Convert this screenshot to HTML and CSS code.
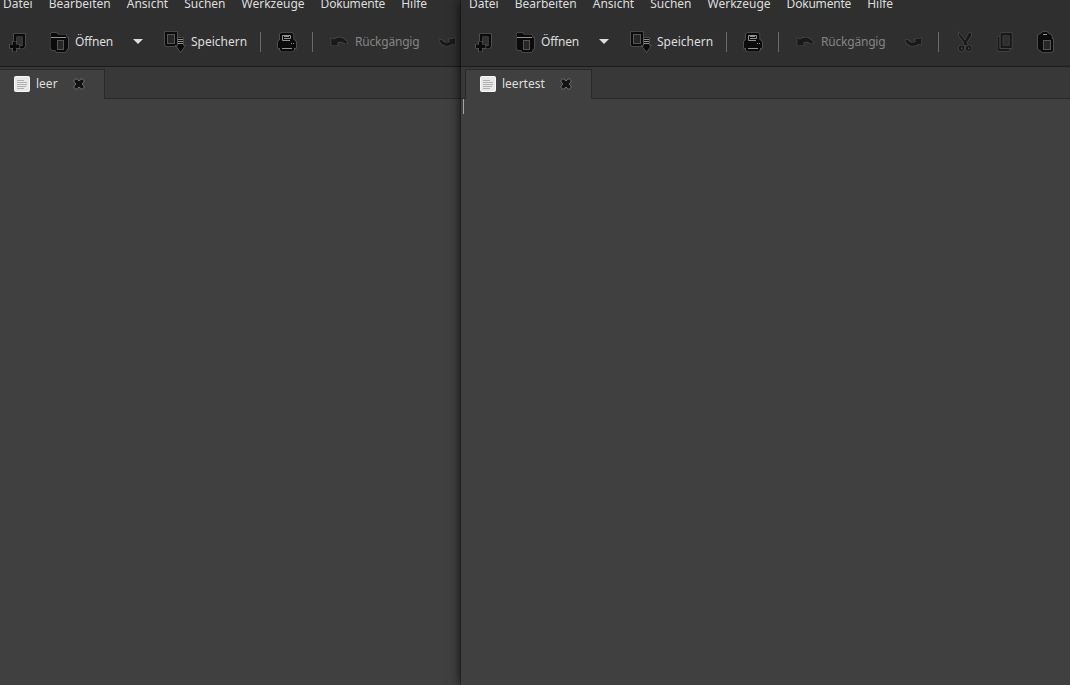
FILE: index.html
```
<!DOCTYPE html>
<html lang="de">
<head>
<meta charset="utf-8">
<title>leertest</title>
<link rel="stylesheet" href="styles.css">
</head>
<body>
<svg class="defs" aria-hidden="true">
  <symbol id="new" viewBox="0 0 24 24">
    <path fill-rule="evenodd" d="M7 4H18V16.500L16.500 18.500H12V16H15.500V6.500H9.500V11H7Z"/>
    <path d="M6 11.500H9.200V14.500H12.500V18H9.200V21.500H6V18H3V14.500H6Z"/>
  </symbol>
  <symbol id="open" viewBox="0 0 24 24">
    <path d="M3.500 4L4.500 3H9.500L11 4.500H18.500L19.500 5.500V7.500H21V18.500L19.500 20V21L18.500 22H9.500L8 20H5L3.500 18.500Z"/>
    <path class="lit" d="M4 7.500H19"/>
    <path class="well" d="M10.500 10.500H16.500V19.500H10.500Z"/>
  </symbol>
  <symbol id="save" viewBox="0 0 24 24">
    <path d="M3 2H15V15L14 16H4L3 15Z"/>
    <path class="well" d="M5.500 4.500H12.500V13.500H5.500Z"/>
    <path d="M16 8H21V15.500H23L18.500 22L14 15.500H16Z"/>
    <path class="lit" d="M16 9.500H21M16 11.500H21M16 13.500H21"/>
  </symbol>
  <symbol id="print" viewBox="0 0 24 24">
    <path d="M6 3H17L18.500 4V9.500L21 11.500V18H19V20L18 21.500H6L5 20V18H3V11.500L5 9.500V4Z"/>
    <path class="lit" d="M7.500 10.500V5.500H15.500V8.500M9 6.500H14M9 8.500H15.500M7.500 10.500H15M7 18.500H17M16 13.500H17M18 13.500H19"/>
  </symbol>
  <symbol id="undo" viewBox="0 0 24 24">
    <path d="M4.300 8L7 9.500C11 6 17 7 20 12V13.500H17.500C15 11.300 12.500 11.500 10.200 13L11 15.500H4.300Z"/>
  </symbol>
  <symbol id="redo" viewBox="0 0 24 24">
    <path d="M4.500 10H7C9.500 13 12 13.300 15 11.500L13.500 9.500L20.500 8L20 15L17.500 14C12.500 17.500 7 16 4.500 11.500Z"/>
  </symbol>
  <symbol id="cut" viewBox="0 0 24 24">
    <path d="M6 3L12 10.500L16 3H18V6L13.500 12.500L15 15H10.500L11 12.500L6 6Z"/>
    <path fill-rule="evenodd" d="M7 15.500H10.500L11.500 17.500L10.500 20.500L8.500 21.500L6 20V17ZM8 17.500V19.500H9.500V17.500ZM14 15.500H17L18.500 17V20L16 21.500L13 20V17ZM15 17.500V19.500H16.500V17.500Z"/>
  </symbol>
  <symbol id="copy" viewBox="0 0 24 24">
    <path d="M4.500 6.500H6.500V18.800H17L15.500 21.300H6L4.500 20Z"/>
    <path fill-rule="evenodd" d="M7.500 3H18.800V18H7.500ZM9.700 5.500V15.500H16.500V5.500Z"/>
  </symbol>
  <symbol id="paste" viewBox="0 0 24 24">
    <path d="M5 5L8 3.500L9.500 2H14L15.500 3.500L18.500 5L19 9H20V21L19 22H9L7.500 20.500L5 19Z"/>
    <path class="lit" d="M10 4.500H14"/>
    <path class="well" d="M10.500 10.500H17.500V19.500H10.500Z"/>
  </symbol>
  <symbol id="page" viewBox="0 0 16 16">
    <rect class="sheet" x=".5" y=".5" width="15" height="15" rx="1"/>
    <path class="rows" d="M3 4.500H10M3 6.500H13M3 8.500H13M3 10.500H12M3 12.500H10"/>
  </symbol>
  <symbol id="close" viewBox="0 0 12 12">
    <path d="M3 1L6 3.300L9 1L11 3L8.700 6L11 9L9 11L6 8.700L3 11L1 9L3.300 6L1 3Z"/>
  </symbol>
</svg>

<main class="desktop">
  <section class="window window-back">
    <nav class="menubar"><span>Datei</span><span>Bearbeiten</span><span>Ansicht</span><span>Suchen</span><span>Werkzeuge</span><span class="tight">Dokumente</span><span>Hilfe</span></nav>
    <div class="toolbar">
      <div class="tool"><svg class="icon"><use href="#new"/></svg></div>
      <div class="tool"><svg class="icon"><use href="#open"/></svg><span class="tight">Öffnen</span></div>
      <div class="tool"><i class="arrow"></i></div>
      <div class="tool"><svg class="icon"><use href="#save"/></svg><span class="save-label">Speichern</span></div>
      <i class="separator"></i>
      <div class="tool"><svg class="icon"><use href="#print"/></svg></div>
      <i class="separator"></i>
      <div class="tool disabled"><svg class="icon"><use href="#undo"/></svg><span class="tight">Rückgängig</span></div>
      <div class="tool disabled"><svg class="icon"><use href="#redo"/></svg></div>
    </div>
    <div class="tabs">
      <div class="tab tab-short"><svg class="page"><use href="#page"/></svg><span class="title">leer</span><svg class="close"><use href="#close"/></svg></div>
    </div>
    <div class="editor"></div>
  </section>

  <section class="window window-front">
    <nav class="menubar"><span>Datei</span><span>Bearbeiten</span><span>Ansicht</span><span>Suchen</span><span>Werkzeuge</span><span class="tight">Dokumente</span><span>Hilfe</span></nav>
    <div class="toolbar">
      <div class="tool"><svg class="icon"><use href="#new"/></svg></div>
      <div class="tool"><svg class="icon"><use href="#open"/></svg><span class="tight">Öffnen</span></div>
      <div class="tool"><i class="arrow"></i></div>
      <div class="tool"><svg class="icon"><use href="#save"/></svg><span class="save-label">Speichern</span></div>
      <i class="separator"></i>
      <div class="tool"><svg class="icon"><use href="#print"/></svg></div>
      <i class="separator"></i>
      <div class="tool disabled"><svg class="icon"><use href="#undo"/></svg><span class="tight">Rückgängig</span></div>
      <div class="tool disabled"><svg class="icon"><use href="#redo"/></svg></div>
      <i class="separator"></i>
      <div class="tool disabled"><svg class="icon"><use href="#cut"/></svg></div>
      <div class="tool disabled"><svg class="icon"><use href="#copy"/></svg></div>
      <div class="tool"><svg class="icon"><use href="#paste"/></svg></div>
    </div>
    <div class="tabs">
      <div class="tab tab-long"><svg class="page"><use href="#page"/></svg><span class="title">leertest</span><svg class="close"><use href="#close"/></svg></div>
    </div>
    <div class="editor"><i class="caret"></i></div>
  </section>
</main>
</body>
</html>
```
FILE: styles.css
```
* { box-sizing: border-box; }
body {
  margin: 0;
  background: #404040;
  color: #dedede;
  font: 12px/16px "Noto Sans", sans-serif;
}
.defs { display: none; }
.desktop {
  display: grid;
  grid-template-columns: 461px 609px;
  height: 685px;
  overflow: hidden;
}
.window {
  display: flex;
  flex-direction: column;
  min-width: 0;
  white-space: nowrap;
}
.window-back { margin-left: -5px; overflow: hidden; }
.window-front {
  z-index: 1;
  background: #404040;
  box-shadow: -1px 0 rgba(0, 0, 0, .2), -1px 0 10px rgba(0, 0, 0, .75);
}
.menubar {
  display: flex;
  gap: 16px;
  height: 17px;
  padding-left: 8px;
  background: #2f2f2f;
}
.menubar span { margin-top: -4px; }
.tight { letter-spacing: -.2px; }
.toolbar {
  display: grid;
  grid-template-columns: 40px 86px 29px 98px 15px 37px 15px 108px 37px 15px 40px 40px 24px;
  align-items: center;
  height: 50px;
  padding-left: 12px;
  background: #2f2f2f;
  border-bottom: 1px solid #1b1b1b;
}
.tool { display: flex; align-items: center; gap: 4px; }
.save-label { margin-left: 1px; }
.icon {
  width: 24px;
  height: 24px;
  flex: none;
  fill: #0b0b0b;
  stroke: #636363;
  stroke-width: 1.2;
  paint-order: stroke;
}
.lit { fill: none; stroke: #929292; stroke-width: 1; }
.well { fill: #262626; stroke: #858585; stroke-width: 1; }
.arrow {
  border: 5px solid transparent;
  border-top-color: #dedede;
  border-bottom: 0;
}
.separator { width: 1px; height: 20px; background: #696969; }
.disabled { color: #858585; }
.disabled .icon { opacity: .6; }
.tabs {
  display: flex;
  align-items: flex-end;
  height: 32px;
  padding-left: 4px;
  background: #383838;
  box-shadow: inset 0 -1px #292929;
}
.tab {
  display: flex;
  align-items: center;
  height: 30px;
  padding: 0 19px 1px 14px;
  background: #404040;
  border: 1px solid #292929;
  border-bottom: 0;
}
.tab-short { width: 106px; }
.tab-long { width: 127px; }
.page { width: 16px; height: 16px; margin-right: 6px; }
.sheet { fill: #e8e8e8; stroke: #f8f8f8; }
.rows { stroke: #b0b0b0; stroke-width: 1; }
.close {
  width: 12px;
  height: 12px;
  margin-left: auto;
  fill: #111;
  stroke: #858585;
  stroke-width: 1.2;
  paint-order: stroke;
}
.editor { display: flex; flex: 1; background: #404040; }
.window-front .editor { padding-left: 2px; }
.caret { width: 1px; height: 15px; background: #a5a5a5; }
```
